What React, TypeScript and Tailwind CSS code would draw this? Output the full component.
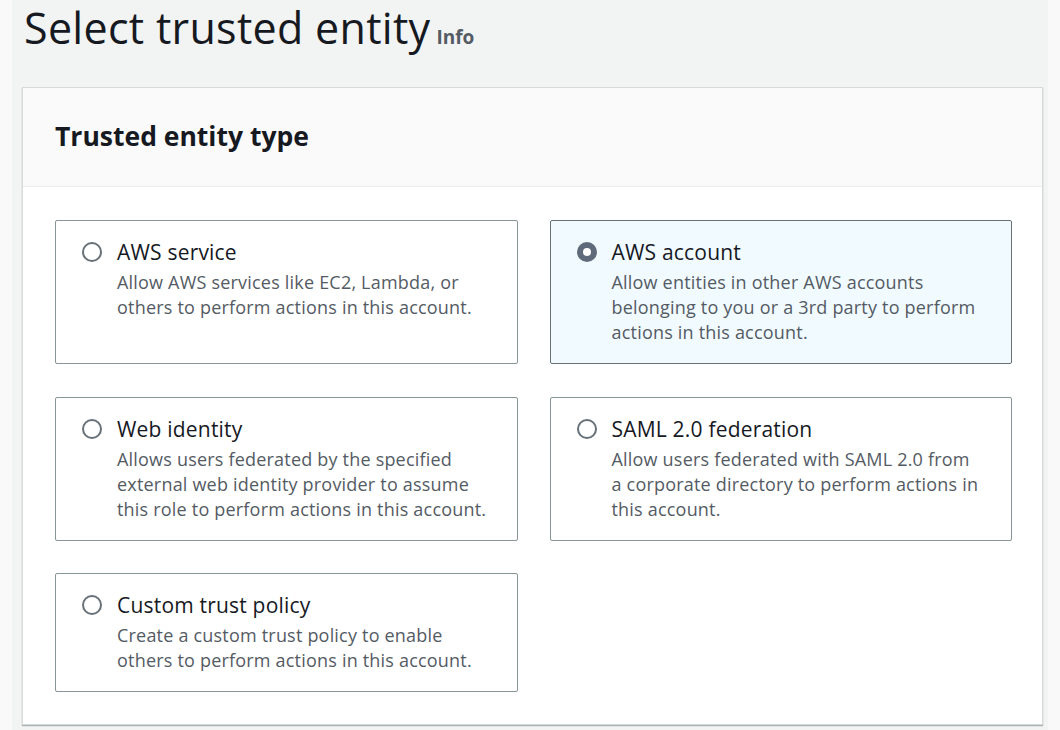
import { useState } from "react";

interface EntityOption {
  id: string;
  title: string;
  lines: string[];
}

const options: EntityOption[] = [
  {
    id: "service",
    title: "AWS service",
    lines: ["Allow AWS services like EC2, Lambda, or", "others to perform actions in this account."],
  },
  {
    id: "account",
    title: "AWS account",
    lines: [
      "Allow entities in other AWS accounts",
      "belonging to you or a 3rd party to perform",
      "actions in this account.",
    ],
  },
  {
    id: "web",
    title: "Web identity",
    lines: [
      "Allows users federated by the specified",
      "external web identity provider to assume",
      "this role to perform actions in this account.",
    ],
  },
  {
    id: "saml",
    title: "SAML 2.0 federation",
    lines: [
      "Allow users federated with SAML 2.0 from",
      "a corporate directory to perform actions in",
      "this account.",
    ],
  },
  {
    id: "custom",
    title: "Custom trust policy",
    lines: ["Create a custom trust policy to enable", "others to perform actions in this account."],
  },
];

const Radio = ({ checked }: { checked: boolean }) =>
  checked ? (
    <span className="mt-[3px] flex size-[20px] shrink-0 items-center justify-center rounded-full bg-[#5f6b7a]">
      <span className="size-[8px] rounded-full bg-white" />
    </span>
  ) : (
    <span className="mt-[3px] size-[20px] shrink-0 rounded-full border-2 border-[#687078] bg-white" />
  );

export default function App() {
  const [selected, setSelected] = useState("account");

  return (
    <div
      className="flex h-[730px] w-full justify-center bg-[#f9f9f9]"
      style={{ fontFamily: '"Open Sans", "Noto Sans", sans-serif' }}
    >
      <div className="w-[1036px] bg-[#f2f3f3] pl-[10px] pr-[5px]">
        <div className="flex h-[87px] items-baseline pl-[2px]">
          <h1 className="text-[43px] leading-[56px] font-normal tracking-[0.3px] text-[#16191f]">
            Select trusted entity
          </h1>
          <span className="ml-[6px] text-[19px] font-bold text-[#545b64]">Info</span>
        </div>

        <div className="border border-[#d5dbdb] bg-white shadow-[0_1px_1px_0_rgba(0,28,36,0.3)]">
          <div className="flex h-[99px] items-center border-b border-[#eaeded] bg-[#fafafa] px-[32px]">
            <h2 className="text-[26.5px] font-bold text-[#16191f]">Trusted entity type</h2>
          </div>

          <div className="grid grid-cols-2 gap-x-[32px] gap-y-[32.5px] pl-[32px] pr-[30px] pt-[33px] pb-[32px]">
            {options.map((opt) => {
              const checked = selected === opt.id;
              return (
                <div
                  key={opt.id}
                  onClick={() => setSelected(opt.id)}
                  className={
                    checked
                      ? "flex cursor-pointer gap-[15px] rounded-[2px] border border-[#687078] bg-[#f1faff] px-[26px] pt-[18px] pb-[18px]"
                      : "flex cursor-pointer gap-[15px] rounded-[2px] border border-[#879596] bg-white px-[26px] pt-[18px] pb-[18px]"
                  }
                >
                  <Radio checked={checked} />
                  <div className="flex flex-col">
                    <div className="text-[21px] leading-[26px] tracking-[0.2px] text-[#16191f]">{opt.title}</div>
                    <div className="mt-[5px] whitespace-nowrap text-[18px] leading-[25px] tracking-[0.2px] text-[#545b64]">
                      {opt.lines.map((l) => (
                        <div key={l}>{l}</div>
                      ))}
                    </div>
                  </div>
                </div>
              );
            })}
          </div>
        </div>
      </div>
    </div>
  );
}
